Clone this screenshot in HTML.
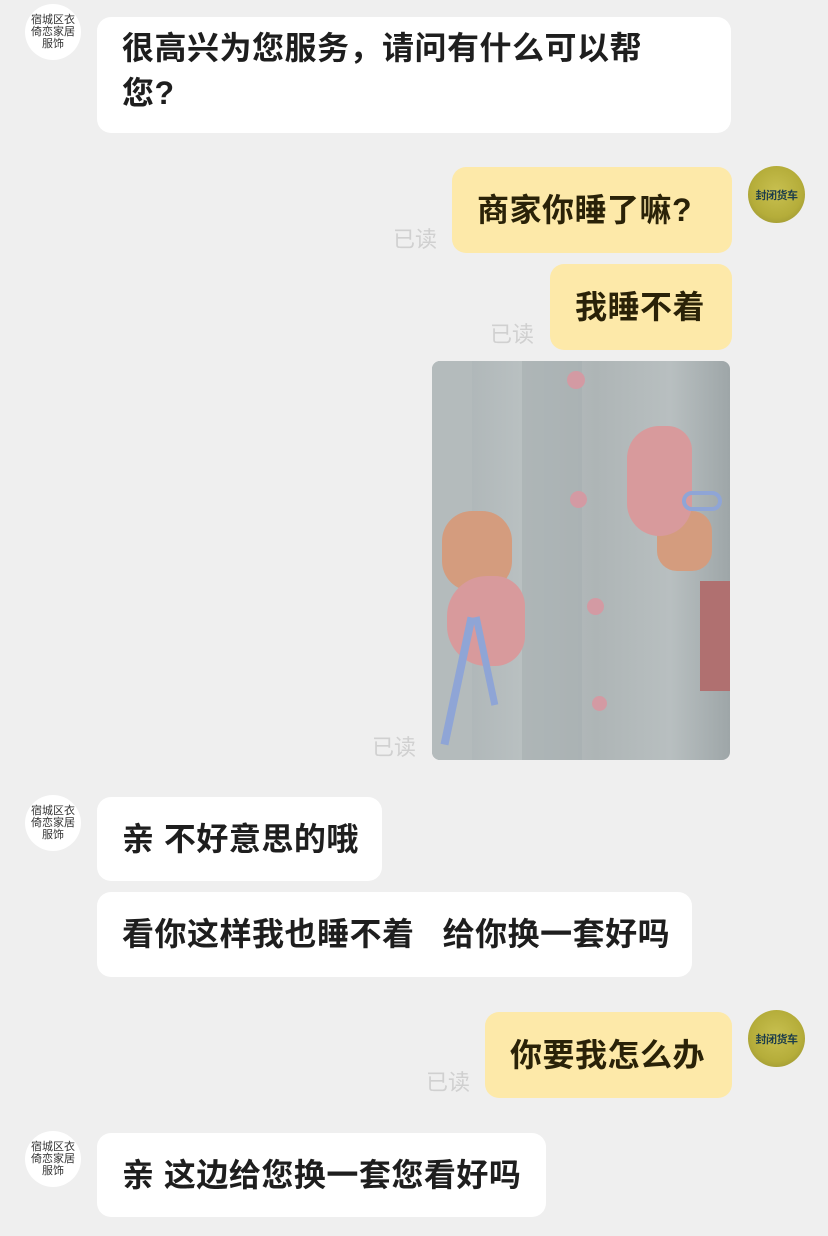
<!DOCTYPE html>
<html><head><meta charset="utf-8"><style>
*{margin:0;padding:0;box-sizing:border-box}
body{width:828px;height:1236px;background:#efefef;position:relative;overflow:hidden;font-family:"Liberation Sans","Noto Sans CJK SC",sans-serif}
.b{position:absolute;border-radius:14px;font-size:32px;color:#1e1e1e;font-weight:bold;line-height:45px;padding:0 25px;display:flex;align-items:center;white-space:nowrap;letter-spacing:0.5px}
.w{background:#fff}
.y{background:#fde9a9;color:#2a2208}
.r{position:absolute;font-size:22px;color:#d0d0d0}
.al{position:absolute;width:56px;height:56px;border-radius:50%;background:#fff;font-size:11px;line-height:12px;text-align:center;color:#333;display:flex;align-items:center;justify-content:center;padding-top:0}
.ar{position:absolute;width:57px;height:57px;border-radius:50%;background:radial-gradient(circle at 50% 45%,#c8c050 0%,#b5ad3a 60%,#8f8a30 100%);font-size:11px;font-weight:bold;color:#1d3d4a;display:flex;align-items:center;justify-content:center;letter-spacing:-0.5px}
.img{position:absolute;left:432px;top:361px;width:298px;height:399px;border-radius:8px;overflow:hidden;background:linear-gradient(90deg,#a9b1b3,#b9c0c1 30%,#aeb5b6 55%,#b8bfc0 80%,#9ea6a8)}
</style></head><body>
<div class="al" style="left:25px;top:4px">宿城区衣<br>倚恋家居<br>服饰</div>
<div class="b w" style="left:97px;top:17px;width:634px;height:116px;align-items:flex-start;padding-top:9px">很高兴为您服务，请问有什么可以帮<br>您?</div>

<div class="ar" style="left:748px;top:166px">封闭货车</div>
<div class="b y" style="left:452px;top:167px;width:280px;height:86px">商家你睡了嘛?</div>
<div class="r" style="left:393px;top:222px">已读</div>

<div class="b y" style="left:550px;top:264px;width:182px;height:86px">我睡不着</div>
<div class="r" style="left:490px;top:317px">已读</div>

<div class="img">
 <div style="position:absolute;left:0;top:0;width:40px;height:399px;background:#b4bbbc"></div>
 <div style="position:absolute;left:90px;top:0;width:60px;height:399px;background:#a7afb0;opacity:.6"></div>
 <div style="position:absolute;left:10px;top:150px;width:70px;height:80px;background:#d49c7e;border-radius:30px"></div>
 <div style="position:absolute;left:225px;top:150px;width:55px;height:60px;background:#d49c7e;border-radius:20px"></div>
 <div style="position:absolute;left:195px;top:65px;width:65px;height:110px;background:#d89a9c;border-radius:40px 30px 40px 40px"></div>
 <div style="position:absolute;left:15px;top:215px;width:78px;height:90px;background:#d89a9c;border-radius:40px 30px 30px 40px"></div>
 <div style="position:absolute;left:22px;top:255px;width:8px;height:130px;background:#8fa5d6;transform:rotate(12deg)"></div>
 <div style="position:absolute;left:50px;top:255px;width:7px;height:90px;background:#8fa5d6;transform:rotate(-12deg)"></div>
 <div style="position:absolute;left:250px;top:130px;width:40px;height:20px;border:4px solid #8fa5d6;border-radius:10px"></div>
 <div style="position:absolute;right:0;top:220px;width:30px;height:110px;background:#b07070"></div>
 <div style="position:absolute;left:135px;top:10px;width:18px;height:18px;border-radius:50%;background:#d39aa3"></div>
 <div style="position:absolute;left:138px;top:130px;width:17px;height:17px;border-radius:50%;background:#d39aa3"></div>
 <div style="position:absolute;left:155px;top:237px;width:17px;height:17px;border-radius:50%;background:#d39aa3"></div>
 <div style="position:absolute;left:160px;top:335px;width:15px;height:15px;border-radius:50%;background:#d39aa3"></div>
</div>
<div class="r" style="left:372px;top:730px">已读</div>

<div class="al" style="left:25px;top:795px">宿城区衣<br>倚恋家居<br>服饰</div>
<div class="b w" style="left:97px;top:797px;width:285px;height:84px">亲 不好意思的哦</div>
<div class="b w" style="left:97px;top:892px;width:595px;height:85px">看你这样我也睡不着&nbsp;&nbsp;&nbsp;给你换一套好吗</div>

<div class="ar" style="left:748px;top:1010px">封闭货车</div>
<div class="b y" style="left:485px;top:1012px;width:247px;height:86px">你要我怎么办</div>
<div class="r" style="left:426px;top:1065px">已读</div>

<div class="al" style="left:25px;top:1131px">宿城区衣<br>倚恋家居<br>服饰</div>
<div class="b w" style="left:97px;top:1133px;width:449px;height:84px">亲 这边给您换一套您看好吗</div>
</body></html>
